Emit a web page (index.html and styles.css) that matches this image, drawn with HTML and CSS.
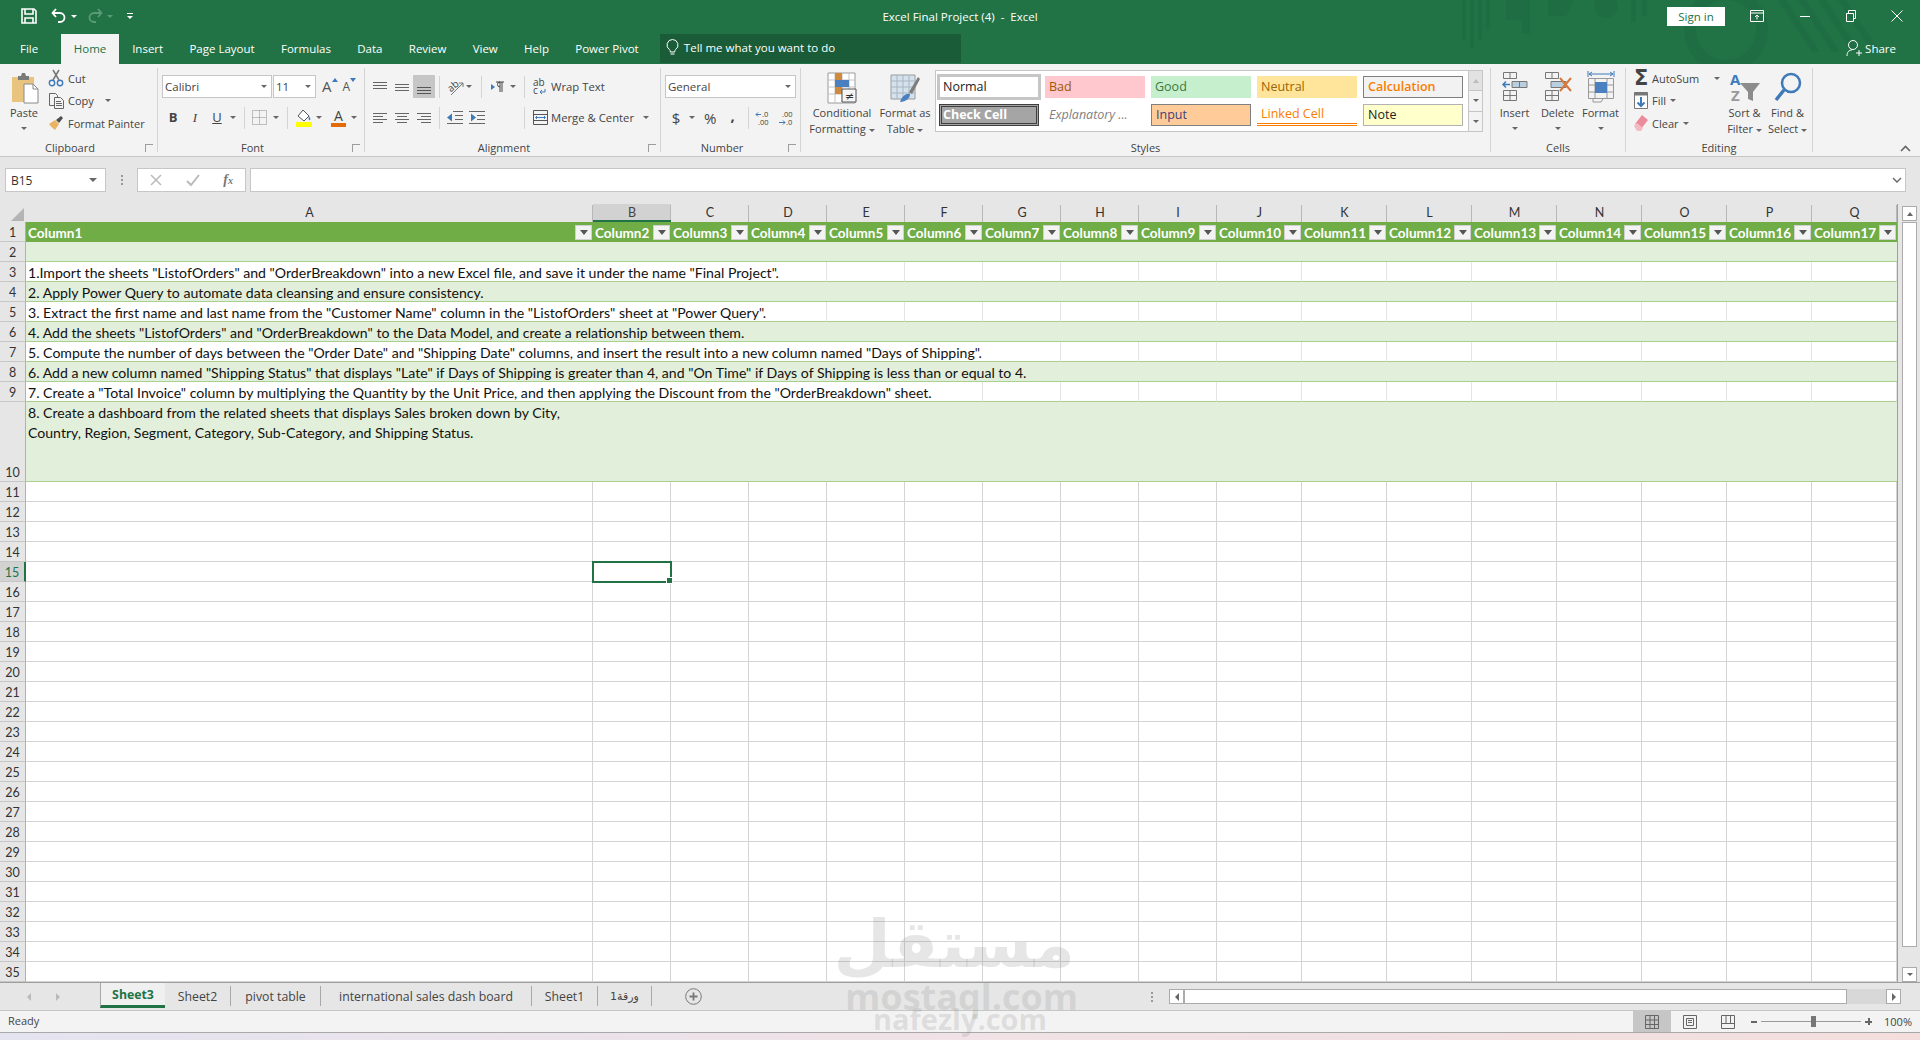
FILE: index.html
```html
<!DOCTYPE html>
<html lang="en">
<head>
  <meta charset="UTF-8">
  <title>Excel Final Project (4) - Excel</title>
  <link rel="stylesheet" href="styles.css">
</head>
<body>
  <div class="window">
    <div class="chrome">
      <svg class="deco" width="460" height="64" viewBox="0 0 460 64">
        <g fill="#1f6e43">
          <path d="M6 0h4v40h-4zM14 0h4v48h-4zM22 0h4v40h-4zM30 0h4v30h-4z"/>
          <path d="M50 0h24v34h-8v-14h-16z"/>
          <path d="M92 0h26l-8 16h-18z"/>
          <circle cx="150" cy="6" r="12"/>
          <path d="M175 0h5v22h-5zM186 0h5v16h-5z"/>
          <circle cx="270" cy="30" r="36" fill="none" stroke="#1f6e43" stroke-width="12"/>
          <path d="M330 0l34 52h-8L322 0zM350 0l34 52h-8L342 0zM370 0l34 52h-8L362 0zM390 0l34 52h-8L382 0z"/>
        </g>
      </svg>
      <!-- title bar -->
      <header class="titlebar">
        <div class="qat">
          <svg width="18" height="18" viewBox="0 0 18 18" fill="none" stroke="#fff" stroke-width="1.6"><path d="M2 2h12l2 2v12H2z"/><path d="M5 2v5h8V2M5 16v-5h8v5"/></svg>
          <svg class="undo" width="18" height="18" viewBox="0 0 18 18" fill="none" stroke="#fff" stroke-width="1.8"><path d="M6 2L2.500 6 6 10"/><path d="M3 6h7a4.500 4.500 0 0 1 0 9H8"/></svg>
          <span class="caret caret-w"></span>
          <svg class="redo" width="18" height="18" viewBox="0 0 18 18" fill="none" stroke="#5b9a76" stroke-width="1.8"><path d="M12 2l3.500 4L12 10"/><path d="M15 6H8a4.500 4.500 0 0 0 0 9h2"/></svg>
          <span class="caret caret-dim"></span>
          <span class="customize"><i></i><span class="caret caret-w"></span></span>
        </div>
        <div class="doc-title">Excel Final Project (4)&nbsp; -&nbsp; Excel</div>
        <div class="win-controls">
          <button class="signin">Sign in</button>
          <svg class="wc wc-first" width="14" height="12" viewBox="0 0 14 12" fill="none" stroke="#fff"><path d="M.5.500h13v11H.5zM.5 3h13"/><path d="M7 9.500V5M5 7l2-2 2 2"/></svg>
          <svg class="wc" width="12" height="12" viewBox="0 0 12 12" stroke="#fff"><path d="M1 6.500h10"/></svg>
          <svg class="wc" width="12" height="12" viewBox="0 0 12 12" fill="none" stroke="#fff"><path d="M1.500 3.500h7v8h-7zM3.500 3.500v-3h7v8h-2"/></svg>
          <svg class="wc" width="12" height="12" viewBox="0 0 12 12" stroke="#fff"><path d="M.5.500l11 11M11.500.500l-11 11"/></svg>
        </div>
      </header>

      <!-- ribbon tabs -->
      <nav class="tabs">
        <a class="tab tab-file">File</a>
        <a class="tab active">Home</a>
        <a class="tab">Insert</a>
        <a class="tab">Page Layout</a>
        <a class="tab">Formulas</a>
        <a class="tab">Data</a>
        <a class="tab">Review</a>
        <a class="tab">View</a>
        <a class="tab">Help</a>
        <a class="tab">Power Pivot</a>
        <div class="tellme">
          <svg width="13" height="17" viewBox="0 0 13 17" fill="none" stroke="#fff"><path d="M6.500.500a5.500 5.500 0 0 1 3 10.100c-.6.500-.8 1.400-.8 2.400H4.300c0-1-.2-1.900-.8-2.400A5.500 5.500 0 0 1 6.500.500zM4.500 15h4"/></svg>
          <span>Tell me what you want to do</span>
        </div>
        <div class="share">
          <svg width="16" height="18" viewBox="0 0 16 18" fill="none" stroke="#fff"><circle cx="7" cy="6" r="4.500"/><path d="M1 17c0-4 2-6 5-6M10 14h6M13 11v6"/></svg>
          <span>Share</span>
        </div>
      </nav>
    </div>

    <!-- ribbon -->
    <section class="ribbon">
      <div class="group g-clipboard">
        <div class="group-body clip">
          <div class="big big-paste">
            <svg width="28" height="32" viewBox="0 0 28 32"><path d="M1 5h22v25H1z" fill="#e9c47f"/><path d="M7 4h3l1-3h3l1 3h3v4H7z" fill="#7a7a7a"/><path d="M13 12h9l5 5v14H13z" fill="#fff" stroke="#8a8a8a"/><path d="M22 12v5h5" fill="none" stroke="#8a8a8a"/></svg>
            <span>Paste</span>
            <span class="caret"></span>
          </div>
          <div class="stack">
            <div class="small-btn">
              <svg width="16" height="18" viewBox="0 0 16 18" fill="none"><path d="M5 11L11 1M11 11L5 1" stroke="#777" stroke-width="1.500"/><circle cx="4" cy="14" r="2.700" stroke="#3e79b8" stroke-width="1.400"/><circle cx="12" cy="14" r="2.700" stroke="#3e79b8" stroke-width="1.400"/></svg>
              <span>Cut</span>
            </div>
            <div class="small-btn">
              <svg width="16" height="16" viewBox="0 0 16 16" fill="#f3f3f3" stroke="#666"><path d="M1.500.500h6l2 2v10h-8z"/><path d="M6.500 4.500h6l3 3v8h-9z"/><path d="M8 8.500h5M8 10.500h6M8 12.500h6"/></svg>
              <span>Copy</span>
              <span class="caret copy-caret"></span>
            </div>
            <div class="small-btn">
              <svg width="16" height="16" viewBox="0 0 16 16"><path d="M1 9l6-4 4 4-4 6c-2-2-4-3-6-6z" fill="#eab464"/><path d="M8 5l5-4 2 2-4 5z" fill="#4e4e4e"/></svg>
              <span>Format Painter</span>
            </div>
          </div>
        </div>
        <div class="group-label">Clipboard<i class="launcher"></i></div>
      </div>

      <div class="group g-font">
        <div class="group-body two-rows">
          <div class="tool-row">
            <div class="combo combo-font">Calibri<span class="caret"></span></div>
            <div class="combo combo-size">11<span class="caret"></span></div>
            <span class="grow-a">A<svg width="6" height="4" viewBox="0 0 6 4" fill="#3e79b8"><path d="M0 4l3-4 3 4z"/></svg></span>
            <span class="shrink-a">A<svg width="6" height="4" viewBox="0 0 6 4" fill="#3e79b8"><path d="M0 0l3 4 3-4z"/></svg></span>
          </div>
          <div class="tool-row">
            <span class="tb tb-b">B</span>
            <span class="tb tb-i">I</span>
            <span class="tb tb-u">U</span>
            <span class="caret c-u"></span>
            <i class="sep s-1"></i>
            <svg class="i-border" width="15" height="15" viewBox="0 0 15 15" fill="none" stroke="#8a8a8a" stroke-dasharray="1 1"><path d="M.5.500h14v14H.5zM7.500.500v14M.5 7.500h14"/></svg>
            <span class="caret c-b"></span>
            <i class="sep s-2"></i>
            <svg class="i-fill" width="16" height="18" viewBox="0 0 16 18"><path d="M7 1l6 6-5 5-6-5z" fill="#fff" stroke="#555"/><path d="M13 7c1 2 2 3 1 4s-2-1-1-4z" fill="#3e79b8"/><path d="M0 13h16v5H0z" fill="#ffff00"/></svg>
            <span class="caret c-f"></span>
            <span class="i-color">A<i></i></span>
            <span class="caret c-c"></span>
          </div>
        </div>
        <div class="group-label">Font<i class="launcher"></i></div>
      </div>

      <div class="group g-align">
        <div class="group-body two-rows">
          <div class="tool-row">
            <svg class="al" width="14" height="10" viewBox="0 0 14 10" stroke="#666"><path d="M0 .500h14M0 3.500h14M0 6.500h14"/></svg>
            <svg class="al" width="14" height="10" viewBox="0 0 14 10" stroke="#666"><path d="M0 2.500h14M0 5.500h14M0 8.500h14"/></svg>
            <span class="al-on"><svg width="14" height="10" viewBox="0 0 14 10" stroke="#555"><path d="M0 3.500h14M0 6.500h14M0 9.500h14"/></svg></span>
            <i class="sep s-3"></i>
            <svg class="i-orient" width="18" height="18" viewBox="0 0 18 18"><text x="1" y="11" transform="rotate(-40 7 9)" class="svg-ab">ab</text><path d="M4 17L16 5M16 5v4M16 5h-4" fill="none" stroke="#777"/></svg>
            <span class="caret c-o"></span>
            <i class="sep s-4"></i>
            <svg class="i-rtl" width="15" height="12" viewBox="0 0 15 12"><path d="M0 3l4 3-4 3z" fill="#3e79b8"/><path d="M5 1h8M11 1v10M9 1v10M9 1a2.500 2.500 0 0 0 0 5" fill="none" stroke="#444"/></svg>
            <span class="caret c-r"></span>
            <i class="sep s-5"></i>
            <svg class="i-wrap" width="13" height="16" viewBox="0 0 13 16"><text x="0" y="7" class="svg-ab">ab</text><text x="0" y="15" class="svg-ab">c</text><path d="M12 10v3H7M9 11l-2 2 2 2" fill="none" stroke="#3e79b8"/></svg>
            <span class="ribbon-text">Wrap Text</span>
          </div>
          <div class="tool-row">
            <svg class="al" width="14" height="10" viewBox="0 0 14 10" stroke="#666"><path d="M0 .500h14M0 3.500h10M0 6.500h14M0 9.500h10"/></svg>
            <svg class="al" width="14" height="10" viewBox="0 0 14 10" stroke="#666"><path d="M0 .500h14M2 3.500h10M0 6.500h14M2 9.500h10"/></svg>
            <svg class="al al-3" width="14" height="10" viewBox="0 0 14 10" stroke="#666"><path d="M0 .500h14M4 3.500h10M0 6.500h14M4 9.500h10"/></svg>
            <i class="sep s-3b"></i>
            <svg class="i-ind" width="16" height="13" viewBox="0 0 16 13"><path d="M6 .500h10M8 4.500h8M8 8.500h8M0 12.500h16" stroke="#666"/><path d="M0 6.500l5-4v8z" fill="#3e79b8"/></svg>
            <svg class="i-ind2" width="16" height="13" viewBox="0 0 16 13"><path d="M0 .500h16M8 4.500h8M8 8.500h8M0 12.500h16" stroke="#666"/><path d="M7 6.500l-5-4v8z" fill="#3e79b8"/></svg>
            <i class="sep s-4b"></i>
            <svg class="i-merge" width="15" height="15" viewBox="0 0 15 15" fill="none" stroke="#555"><path d="M.5.500h14v14H.5zM.5 4.500h14M.5 10.500h14"/><path d="M3 7.500h9M4 6L2.500 7.500 4 9M11 6l1.500 1.500L11 9" stroke="#3e79b8"/></svg>
            <span class="ribbon-text">Merge &amp; Center</span>
            <span class="caret c-m"></span>
          </div>
        </div>
        <div class="group-label">Alignment<i class="launcher"></i></div>
      </div>

      <div class="group g-number">
        <div class="group-body two-rows">
          <div class="tool-row">
            <div class="combo combo-num">General<span class="caret"></span></div>
          </div>
          <div class="tool-row num-row">
            <span class="n-cur">$</span>
            <span class="caret c-n"></span>
            <span class="n-pct">%</span>
            <span class="n-com">,</span>
            <i class="sep s-6"></i>
            <svg class="i-dec" width="15" height="16" viewBox="0 0 15 16"><text x="6" y="7" class="svg-dec">.0</text><text x="2" y="15" class="svg-dec">.00</text><path d="M0 4.500h5M2 2.500L0 4.500l2 2" fill="none" stroke="#3e79b8"/></svg>
            <svg class="i-dec2" width="15" height="16" viewBox="0 0 15 16"><text x="3" y="7" class="svg-dec">.00</text><text x="7" y="15" class="svg-dec">.0</text><path d="M0 12.500h6M4 10.500l2 2-2 2" fill="none" stroke="#3e79b8"/></svg>
          </div>
        </div>
        <div class="group-label">Number<i class="launcher"></i></div>
      </div>

      <div class="group g-styles">
        <div class="group-body styles-body">
          <div class="big big-cf">
            <svg width="30" height="31" viewBox="0 0 30 31"><path d="M1 1h27v30H1z" fill="#fff" stroke="#9a9a9a"/><path d="M1 8h27M1 15h27M1 22h27M8 1v30M15 1v30M22 1v30" stroke="#c4c4c4"/><path d="M8 1h7v7H8zM8 15h7v7H8z" fill="#cf8a3c"/><path d="M8 8h14v7H8z" fill="#4a7fc0"/><path d="M15 17h14v13H15z" fill="#f5f5f5" stroke="#555"/><text x="18" y="28" class="svg-neq">≠</text></svg>
            <span>Conditional</span>
            <span>Formatting <i class="caret"></i></span>
          </div>
          <div class="big big-ft">
            <svg width="30" height="31" viewBox="0 0 30 31"><path d="M1 3h24v24H1z" fill="#d4e2ee" stroke="#9a9a9a"/><path d="M1 9h24M1 15h24M1 21h24M7 3v24M13 3v24M19 3v24" stroke="#aab6c0"/><path d="M10 30c2-6 6-9 10-8 0 4-4 8-10 8z" fill="#4a7fc0"/><path d="M19 20L28 5l2 2-8 15z" fill="#7d7d7d"/></svg>
            <span>Format as</span>
            <span>Table <i class="caret"></i></span>
          </div>
          <div class="gallery">
            <div class="style-grid">
              <div class="st st-normal">Normal</div>
              <div class="st st-bad">Bad</div>
              <div class="st st-good">Good</div>
              <div class="st st-neutral">Neutral</div>
              <div class="st st-calc">Calculation</div>
              <div class="st st-check">Check Cell</div>
              <div class="st st-expl">Explanatory ...</div>
              <div class="st st-input">Input</div>
              <div class="st st-linked">Linked Cell</div>
              <div class="st st-note">Note</div>
            </div>
            <div class="gallery-scroll">
              <span class="gs gs-off"><i class="tri-up"></i></span>
              <span class="gs"><i class="caret"></i></span>
              <span class="gs gs-more"><i class="caret"></i></span>
            </div>
          </div>
        </div>
        <div class="group-label group-label-plain">Styles</div>
      </div>

      <div class="group g-cells">
        <div class="group-body cells-body">
          <div class="big big-cell">
            <svg width="26" height="31" viewBox="0 0 26 31" fill="none" stroke="#777"><path d="M1.500 1.500h13v6h-13zM8 1.500v6M1.500 19.500h13v10h-13zM1.500 24.500h13M8 19.500v10"/><path d="M10 10.500h15v6H10zM17.500 10.500v6" fill="#b9cfdf"/><path d="M8 13.500H1M4 10.500l-3 3 3 3" stroke="#3e79b8" stroke-width="1.500"/></svg>
            <span>Insert</span><span class="caret"></span>
          </div>
          <div class="big big-cell">
            <svg width="28" height="31" viewBox="0 0 28 31" fill="none" stroke="#777"><path d="M1.500 1.500h13v6h-13zM8 1.500v6M1.500 19.500h13v10h-13zM1.500 24.500h13M8 19.500v10"/><path d="M7 10.500h15v6H7z" fill="#b9cfdf"/><path d="M16 7l11 13M27 7L16 20" stroke="#d9773b" stroke-width="2"/></svg>
            <span>Delete</span><span class="caret"></span>
          </div>
          <div class="big big-cell">
            <svg width="28" height="33" viewBox="0 0 28 33" fill="none" stroke="#999"><path d="M1 1v6M27 1v6M2 4h24M5 2L2 4l3 2M23 2l3 2-3 2" stroke="#3e79b8"/><path d="M1.500 8.500h25v20h-25zM1.500 15h25M1.500 22h25M8 8.500v20M20 8.500v20"/><path d="M8 12h12v11H8z" fill="#4a7fc0" stroke="none"/><path d="M6 28v4h8l2-3"/></svg>
            <span>Format</span><span class="caret"></span>
          </div>
        </div>
        <div class="group-label group-label-plain">Cells</div>
      </div>

      <div class="group g-editing">
        <div class="group-body editing-body">
          <div class="stack stack-edit">
            <div class="small-btn">
              <span class="sigma">Σ</span>
              <span>AutoSum</span>
              <span class="caret c-sum"></span>
            </div>
            <div class="small-btn">
              <svg width="14" height="17" viewBox="0 0 14 17"><path d="M.5.500h13v16H.5z" fill="#fff" stroke="#777"/><path d="M.5.500h13v3H.5z" fill="#777"/><path d="M7 5v9M3.500 10.500L7 14l3.500-3.500" fill="none" stroke="#3e79b8" stroke-width="2"/></svg>
              <span>Fill</span>
              <span class="caret"></span>
            </div>
            <div class="small-btn">
              <svg width="14" height="16" viewBox="0 0 14 16"><path d="M8 0l6 5-7 9-6-5z" fill="#ec8b99"/><path d="M0 11l3-3 6 5-2 3H3z" fill="#f5b9c1"/></svg>
              <span>Clear</span>
              <span class="caret"></span>
            </div>
          </div>
          <div class="big big-sort">
            <svg width="30" height="31" viewBox="0 0 30 31"><text x="0" y="13" class="svg-a">A</text><text x="1" y="29" class="svg-z">Z</text><path d="M10 11h20l-7 9v9l-5-2v-7z" fill="#8c8c8c"/></svg>
            <span>Sort &amp;</span>
            <span>Filter <i class="caret"></i></span>
          </div>
          <div class="big big-find">
            <svg width="28" height="31" viewBox="0 0 28 31" fill="none" stroke="#3e79b8"><circle cx="17" cy="11" r="9" stroke-width="2.500"/><path d="M10 18L2 28" stroke-width="3.500"/></svg>
            <span>Find &amp;</span>
            <span>Select <i class="caret"></i></span>
          </div>
        </div>
        <div class="group-label group-label-plain">Editing</div>
      </div>
      <svg class="collapse" width="11" height="7" viewBox="0 0 11 7" fill="none" stroke="#666" stroke-width="1.600"><path d="M1 6l4.500-4.500L10 6"/></svg>
    </section>

    <!-- formula bar -->
    <div class="formula-bar">
      <div class="namebox">B15<span class="caret"></span></div>
      <div class="fb-dots"><i></i><i></i><i></i></div>
      <div class="fb-buttons">
        <svg width="12" height="12" viewBox="0 0 12 12" stroke="#bbb" stroke-width="1.500"><path d="M1 1l10 10M11 1L1 11"/></svg>
        <svg width="14" height="12" viewBox="0 0 14 12" fill="none" stroke="#bbb" stroke-width="2"><path d="M1 7l4 4 8-10"/></svg>
        <span class="fx">f<small>x</small></span>
      </div>
      <div class="fb-input"><svg width="10" height="6" viewBox="0 0 10 6" fill="none" stroke="#666" stroke-width="1.400"><path d="M1 1l4 4 4-4"/></svg></div>
    </div>

    <!-- sheet area, filled in by script.js -->
    <div class="sheet">
      <div class="grid" id="grid"></div>
      <div class="vscroll">
        <span class="sb-btn"><i class="tri-up"></i></span>
        <span class="sb-thumb"></span>
        <span class="sb-btn sb-down"><i class="caret"></i></span>
      </div>
    </div>

    <!-- sheet tabs -->
    <div class="sheet-tabs">
      <span class="nav-arrows"><i class="tri-l"></i><i class="tri-r"></i></span>
      <a class="stab on">Sheet3</a>
      <a class="stab t-66">Sheet2</a>
      <a class="stab t-90">pivot table</a>
      <a class="stab t-211">international sales dash board</a>
      <a class="stab t-66">Sheet1</a>
      <a class="stab stab-ar t-54" dir="rtl">ورقة1</a>
      <svg class="add-sheet" width="17" height="17" viewBox="0 0 17 17" fill="none" stroke="#777"><circle cx="8.500" cy="8.500" r="7.800"/><path d="M8.500 4.500v8M4.500 8.500h8" stroke-width="1.800"/></svg>
      <div class="fb-dots tabs-dots"><i></i><i></i><i></i></div>
      <div class="hscroll">
        <span class="sb-btn"><i class="tri-l"></i></span>
        <span class="hs-thumb"></span>
        <span class="hs-gap"></span>
        <span class="sb-btn"><i class="tri-r"></i></span>
      </div>
    </div>

    <!-- status bar -->
    <footer class="statusbar">
      <span class="ready">Ready</span>
      <div class="views">
        <span class="view on"><svg width="14" height="14" viewBox="0 0 14 14" fill="none" stroke="#666"><path d="M.5.500h13v13H.5zM.5 5h13M.5 9.500h13M5 .5v13M9.500.5v13"/></svg></span>
        <span class="view"><svg width="14" height="14" viewBox="0 0 14 14" fill="none" stroke="#666"><path d="M.5.500h13v13H.5zM3.500 3.500h7v7h-7zM5 5.500h4M5 7.500h4"/></svg></span>
        <span class="view"><svg width="14" height="14" viewBox="0 0 14 14" fill="none" stroke="#666"><path d="M.5.500h13v13H.5zM.5 8.500h13M5 .5v8M9.500.5v8"/></svg></span>
      </div>
      <div class="zoom">
        <span class="z-minus"></span>
        <span class="z-track"><i></i></span>
        <span class="z-plus"></span>
        <span class="z-val">100%</span>
      </div>
    </footer>
    <div class="desktop"></div>

    <!-- watermark over the page -->
    <div class="watermark">
      <div class="wm-logo" dir="rtl">مستقل</div>
      <div class="wm-a">mostaql.com</div>
      <div class="wm-b">nafezly.com</div>
    </div>
  </div>
  <script src="script.js"></script>
</body>
</html>
```

FILE: styles.css
```css
* {
  box-sizing: border-box;
}

html, body {
  margin: 0;
  height: 100%;
  overflow: hidden;
}

body {
  font-family: "Open Sans", "Noto Sans", sans-serif;
  font-size: 11px;
  color: #333;
  background: #f3f3f3;
}

.window {
  position: relative;
  width: 1920px;
  height: 1040px;
  display: flex;
  flex-direction: column;
  overflow: hidden;
}

i {
  font-style: normal;
}

svg {
  overflow: visible;
}

.caret {
  display: inline-block;
  width: 0;
  height: 0;
  border-left: 3px solid transparent;
  border-right: 3px solid transparent;
  border-top: 3px solid #666;
  flex: none;
}

.caret-w { border-top-color: #fff; }
.caret-dim { border-top-color: #5b9a76; }

/* title bar */
.chrome {
  position: relative;
  height: 64px;
  flex: none;
  background: #217346;
  overflow: hidden;
}

.deco {
  position: absolute;
  left: 1456px;
  top: 0;
}

.titlebar {
  position: relative;
  height: 34px;
  padding-bottom: 2px;
  color: #fff;
  display: grid;
  grid-template-columns: 1fr auto 1fr;
  align-items: center;
}

.qat {
  display: flex;
  align-items: center;
  padding-left: 20px;
}

.undo { margin-left: 12px; }
.qat .caret { margin-left: 3px; }
.redo { margin-left: 9px; }

.customize {
  margin-left: 14px;
  display: flex;
  flex-direction: column;
  gap: 2px;
  align-items: center;
  width: 6px;
}

.customize i {
  width: 6px;
  height: 1px;
  background: #fff;
}

.qat .customize .caret { margin: 0; }

.doc-title {
  font-size: 11.500px;
}

.win-controls {
  display: flex;
  justify-content: flex-end;
  align-items: center;
}

.signin {
  width: 58px;
  height: 19px;
  border: 0;
  background: #fff;
  color: #217346;
  font: 11.500px "Open Sans", sans-serif;
  padding: 0;
  margin-right: 25px;
}

.wc { margin-right: 34px; }
.wc:last-child { margin-right: 17px; }
.wc-first { margin-right: 35px; }

/* tabs */
.tabs {
  position: relative;
  height: 30px;
  display: flex;
  align-items: stretch;
  color: #fff;
  font-size: 11.500px;
}

.tab {
  padding: 0 13.150px 2px;
  display: flex;
  align-items: center;
}

.tab-file {
  padding: 0 0 2px 20px;
  width: 61px;
}

.tab.active {
  background: #f3f3f3;
  color: #217346;
  width: 58px;
  justify-content: center;
  padding: 0 0 2px;
}

.tellme {
  margin-left: 8px;
  width: 301px;
  height: 29px;
  background: #1a5c38;
  display: flex;
  align-items: center;
  gap: 5px;
  padding: 0 0 2px 6px;
}

.share {
  margin-left: auto;
  padding: 0 24px 2px 0;
  display: flex;
  align-items: center;
  gap: 3px;
}

/* ribbon */
.ribbon {
  position: relative;
  height: 93px;
  background: #f3f3f3;
  border-bottom: 1px solid #c6c6c6;
  display: flex;
  padding-top: 4px;
  color: #444;
}

.group {
  height: 84px;
  border-right: 1px solid #d4d4d4;
  display: flex;
  flex-direction: column;
  flex: none;
}

.group-body {
  height: 70px;
  flex: none;
}

.group-label {
  position: relative;
  height: 14px;
  line-height: 20px;
  text-align: center;
  white-space: nowrap;
  padding-right: 17px;
}

.group-label-plain { padding-right: 0; }

.launcher {
  position: absolute;
  right: 4px;
  top: 6px;
  width: 8px;
  height: 8px;
  border-left: 1px solid #888;
  border-top: 1px solid #888;
  opacity: .8;
}

.g-clipboard { width: 158px; }
.g-font { width: 207px; }
.g-align { width: 296px; }
.g-number { width: 140px; }
.g-styles { width: 690px; }
.g-cells { width: 135px; }
.g-editing { width: 187px; }

.big {
  display: flex;
  flex-direction: column;
  align-items: center;
  flex: none;
  line-height: 16px;
  white-space: nowrap;
}

.big > svg { margin-bottom: 2px; }
.big .caret { vertical-align: middle; }

.clip {
  display: flex;
}

.big-paste {
  width: 48px;
  padding-top: 4px;
}

.big-paste > svg { margin: 0 0 1px 2px; }
.big-paste .caret { margin-top: 6px; }

.stack {
  display: flex;
  flex-direction: column;
  margin-top: -1px;
}

.small-btn {
  height: 22.500px;
  display: flex;
  align-items: center;
  gap: 4px;
  white-space: nowrap;
}

.copy-caret { margin-left: 7px; }

.two-rows {
  padding-top: 7px;
  display: flex;
  flex-direction: column;
  gap: 8px;
}

.tool-row {
  height: 23px;
  display: flex;
  align-items: center;
}

.g-font .tool-row { padding-left: 4px; }

.combo {
  height: 23px;
  background: #fff;
  border: 1px solid #c6c6c6;
  display: flex;
  align-items: center;
  justify-content: space-between;
  padding: 0 4px 0 2px;
  font-size: 11.500px;
}

.combo-font { width: 110px; }
.combo-size { width: 43px; margin-left: 1px; }
.combo-num { width: 131px; margin-left: 4px; }

.grow-a, .shrink-a {
  display: inline-flex;
  align-items: flex-start;
  font-size: 15px;
  color: #555;
  line-height: 17px;
}

.grow-a { margin-left: 6px; }
.shrink-a { margin-left: 5px; font-size: 12px; }

.tb {
  width: 22px;
  text-align: center;
  font-size: 13px;
  color: #444;
  line-height: 23px;
}

.tb-b { font-weight: 700; }
.tb-i { font-style: italic; font-family: "Liberation Serif", serif; }
.tb-u { text-decoration: underline; }

.c-u { margin-left: 2px; }

.sep {
  width: 1px;
  height: 22px;
  background: #d4d4d4;
  flex: none;
}

.s-1 { margin: 0 6px 0 8px; }
.i-border { margin-left: 1px; flex: none; }
.c-b { margin-left: 6px; }
.s-2 { margin: 0 8px; }
.i-fill { flex: none; }
.c-f { margin-left: 4px; }

.i-color {
  margin-left: 9px;
  width: 15px;
  text-align: center;
  font-size: 14px;
  line-height: 15px;
  color: #444;
  display: flex;
  flex-direction: column;
}

.i-color i {
  height: 4px;
  background: #e36c09;
}

.c-c { margin-left: 5px; }

.g-align .tool-row { padding-left: 8px; }
.al { margin-right: 8px; flex: none; }
.al-3 { margin-right: 0; }

.al-on {
  width: 22px;
  height: 23px;
  background: #c6c6c6;
  margin-left: -4px;
  display: flex;
  align-items: flex-end;
  justify-content: center;
  padding-bottom: 4px;
}

.s-3 { margin: 0 7px 0 4px; }
.s-3b { margin: 0 7px 0 8px; }
.i-orient { flex: none; }
.c-o { margin-left: 1px; }
.s-4 { margin: 0 9px; }
.i-rtl { flex: none; }
.c-r { margin-left: 4px; }
.s-5 { margin: 0 8px; }
.s-4b { margin: 0 8px 0 39px; }
.i-ind { flex: none; }
.i-ind2 { margin-left: 6px; flex: none; }
.i-wrap { margin-right: 5px; flex: none; }
.i-merge { margin-right: 3px; flex: none; }
.ribbon-text { white-space: nowrap; font-size: 11.300px; }
.c-m { margin-left: 9px; }

.num-row { padding-left: 10px; }
.n-cur { font-size: 15px; width: 10px; text-align: center; }
.c-n { margin-left: 8px; }
.n-pct { font-size: 15px; margin-left: 9px; }
.n-com { font-size: 15px; font-weight: 700; margin: -6px 0 0 14px; }
.s-6 { margin: 0 7px 0 13px; }
.i-dec { flex: none; }
.i-dec2 { margin-left: 8px; flex: none; }

.svg-ab { font: 10px "Open Sans", sans-serif; fill: #444; }
.svg-dec { font: 7.500px "Open Sans", sans-serif; fill: #444; }
.svg-neq { font: 11px "DejaVu Sans", sans-serif; fill: #333; }
.svg-a { font: 700 15px "Open Sans", sans-serif; fill: #3e79b8; }
.svg-z { font: 700 15px "Open Sans", sans-serif; fill: #999; }

.styles-body {
  display: flex;
  align-items: flex-start;
}

.big-cf {
  width: 66px;
  margin-left: 8px;
  padding-top: 4px;
}

.big-ft {
  width: 60px;
  padding-top: 4px;
}

.gallery {
  margin: 2px 0 0;
  height: 62px;
  border: 1px solid #c6c6c6;
  background: #fff;
  display: flex;
}

.style-grid {
  display: grid;
  grid-template-columns: repeat(5, 100px);
  grid-template-rows: 22px 22px;
  column-gap: 6px;
  row-gap: 6px;
  padding: 5px 4px 0 3px;
  width: 532px;
}

.st {
  display: flex;
  align-items: center;
  padding: 0 0 1px 4px;
  white-space: nowrap;
  font-size: 12.500px;
}

.st-normal {
  outline: 3px solid #c6c6c6;
  outline-offset: -1px;
  color: #222;
}

.st-bad { background: #ffc7ce; color: #9c5700; }
.st-good { background: #c6efce; color: #3a7a3f; }
.st-neutral { background: #ffe49c; color: #9c6500; }
.st-calc { background: #f2f2f2; color: #fa7d00; border: 1px solid #7f7f7f; font-weight: 600; }
.st-check { background: #a5a5a5; color: #fff; font-weight: 700; border: 3px double #3f3f3f; padding-left: 1px; }
.st-expl { color: #7f7f7f; font-style: italic; }
.st-input { background: #ffcc99; color: #3f3f76; border: 1px solid #7f7f7f; }
.st-linked { color: #fa7d00; border-bottom: 3px double #fa7d00; }
.st-note { background: #ffffcc; color: #222; border: 1px solid #b2b2b2; }

.gallery-scroll {
  width: 14px;
  border-left: 1px solid #c6c6c6;
  display: flex;
  flex-direction: column;
  background: #f3f3f3;
}

.gs {
  flex: 1;
  display: flex;
  align-items: center;
  justify-content: center;
  border-bottom: 1px solid #c6c6c6;
}

.gs:last-child { border-bottom: 0; }
.gs-off { background: #e2e2e2; }
.gs-off .tri-up { border-bottom-color: #bbb; }

.tri-up {
  width: 0;
  height: 0;
  border-left: 3.500px solid transparent;
  border-right: 3.500px solid transparent;
  border-bottom: 4px solid #666;
}

.tri-l, .tri-r {
  width: 0;
  height: 0;
  border-top: 4px solid transparent;
  border-bottom: 4px solid transparent;
}

.tri-l { border-right: 4px solid #666; }
.tri-r { border-left: 4px solid #666; }

.cells-body {
  display: flex;
  padding-left: 2px;
}

.big-cell {
  width: 43px;
  padding-top: 2px;
}

.big-cell > svg { height: 33px; margin-bottom: 2px; }
.big-cell .caret { margin-top: 6px; }

.editing-body {
  display: flex;
}

.stack-edit {
  width: 97px;
  padding-left: 8px;
  flex: none;
}

.sigma {
  font: 700 21px "DejaVu Sans", sans-serif;
  color: #444;
  width: 14px;
  line-height: 16px;
}

.stack-edit .small-btn svg { width: 14px; flex: none; }
.c-sum { margin-left: 11px; }

.big-sort, .big-find {
  width: 43px;
  padding-top: 4px;
}

.collapse {
  position: absolute;
  right: 9px;
  top: 81px;
}

/* formula bar */
.formula-bar {
  height: 47px;
  flex: none;
  background: #e6e6e6;
  display: flex;
  padding: 11px 14px 12px 5px;
}

.namebox {
  width: 101px;
  background: #fff;
  border: 1px solid #c6c6c6;
  display: flex;
  align-items: center;
  justify-content: space-between;
  padding: 0 8px 0 5px;
  font-size: 12px;
}

.namebox .caret {
  border-left-width: 4px;
  border-right-width: 4px;
  border-top-width: 4px;
}

.fb-dots {
  width: 31px;
  display: flex;
  flex-direction: column;
  align-items: center;
  justify-content: center;
  gap: 2px;
}

.fb-dots i {
  width: 2px;
  height: 2px;
  background: #999;
}

.fb-buttons {
  width: 109px;
  background: #fff;
  border: 1px solid #c6c6c6;
  display: flex;
  align-items: center;
  justify-content: space-between;
  padding: 0 12px;
}

.fx {
  font: italic 700 14px "Liberation Serif", serif;
  color: #777;
}

.fx small { font-size: 10px; }

.fb-input {
  margin-left: 4px;
  flex: 1;
  background: #fff;
  border: 1px solid #c6c6c6;
  display: flex;
  align-items: center;
  justify-content: flex-end;
  padding-right: 3px;
}

/* grid */
.sheet {
  display: flex;
  height: 778px;
  flex: none;
  background: #fff;
}

.grid {
  position: relative;
  width: 1897px;
  display: grid;
  grid-template-columns: 26px 567px repeat(8, 78px) repeat(8, 85px);
  grid-template-rows: 18px repeat(9, 20px) 80px;
  grid-auto-rows: 20px;
  font-family: Lato, sans-serif;
  font-size: 14.100px;
  color: #111;
}

.corner {
  background: #e6e6e6;
  position: relative;
}

.corner::after {
  content: "";
  position: absolute;
  right: 2px;
  bottom: 1px;
  border-left: 13px solid transparent;
  border-bottom: 13px solid #b4b4b4;
}

.ch {
  background: #e6e6e6;
  text-align: center;
  line-height: 18px;
  font-size: 12.500px;
  color: #333;
  position: relative;
}

.ch::after {
  content: "";
  position: absolute;
  right: 0;
  top: 1px;
  bottom: 0;
  width: 1px;
  background: #b8b8b8;
}

.ch.sel {
  background: #d2d2d2;
  border-bottom: 2px solid #217346;
  color: #444;
}

.rh {
  background: #e6e6e6;
  border-bottom: 1px solid #c6c6c6;
  border-right: 1px solid #b0b0b0;
  font-size: 12.500px;
  color: #333;
  line-height: 16px;
  display: flex;
  align-items: flex-end;
  justify-content: center;
}

.rh.sel {
  background: #d2d2d2;
  color: #217346;
  border-right: 2px solid #217346;
}

.c {
  border-right: 1px solid #d4d4d4;
  border-bottom: 1px solid #d4d4d4;
  padding: 1px 0 0 2px;
  line-height: 20px;
  white-space: nowrap;
}

.c.white {
  border-right-color: #e4e4e4;
  border-bottom-color: #a9d08e;
}

.c.band {
  background: #e2efda;
  border-right: 0;
  border-bottom-color: #a9d08e;
}

.c.full { grid-column: span 17; }
.c.s4 { grid-column: span 4; }
.c.s6 { grid-column: span 6; }
.c.s7 { grid-column: span 7; }

.c.head {
  background: #70ad47;
  color: #fff;
  font-weight: 700;
  font-size: 13.500px;
  border: 0;
  display: flex;
  align-items: center;
  justify-content: space-between;
  padding: 1px 1px 0 2px;
}

.filter {
  width: 17px;
  height: 15px;
  background: #f3f3f3;
  border: 1px solid #d0d0d0;
  display: flex;
  align-items: center;
  justify-content: center;
  flex: none;
}

.filter .caret {
  border-left-width: 4px;
  border-right-width: 4px;
  border-top-width: 5px;
  border-top-color: #555;
}

.cursor {
  position: absolute;
  left: 592px;
  top: 357px;
  width: 80px;
  height: 22px;
  border: 2px solid #217346;
}

.cursor::after {
  content: "";
  position: absolute;
  right: -3px;
  bottom: -3px;
  width: 5px;
  height: 5px;
  background: #217346;
  border: 1px solid #fff;
}

.vscroll {
  width: 23px;
  background: #e6e6e6;
  border-left: 1px solid #9e9e9e;
  display: flex;
  flex-direction: column;
  padding: 2px 3px 0 4px;
}

.sb-btn {
  width: 15px;
  height: 15px;
  background: #fff;
  border: 1px solid #ababab;
  display: flex;
  align-items: center;
  justify-content: center;
  flex: none;
}

.sb-thumb {
  width: 15px;
  height: 725px;
  background: #fff;
  border: 1px solid #ababab;
  margin-top: 1px;
  flex: none;
}

.sb-down {
  margin-top: auto;
}

/* sheet tabs */
.sheet-tabs {
  height: 28px;
  flex: none;
  background: #e6e6e6;
  border-top: 1px solid #9e9e9e;
  display: flex;
  align-items: flex-start;
  font-size: 12.300px;
  color: #444;
}

.nav-arrows {
  width: 100px;
  height: 27px;
  display: flex;
  align-items: center;
  gap: 25px;
  padding-left: 27px;
}

.nav-arrows i { opacity: .35; }

.stab {
  display: flex;
  align-items: center;
  justify-content: center;
  height: 20px;
  margin-top: 3px;
  border-right: 1px solid #a8a8a8;
  white-space: nowrap;
  flex: none;
}

.t-66 { width: 66px; }
.t-90 { width: 90px; }
.t-211 { width: 211px; }
.t-54 { width: 54px; }

.stab.on {
  width: 65px;
  height: 25px;
  margin-top: 0;
  background: #f0f0f0;
  color: #217346;
  font-weight: 700;
  border-right: 0;
  border-bottom: 3px solid #217346;
  border-left: 1px solid #a8a8a8;
}

.stab-ar { font-family: "DejaVu Sans", sans-serif; font-size: 11px; }

.add-sheet {
  margin: 5px 0 0 33px;
  flex: none;
}

.tabs-dots {
  height: 27px;
  width: 8px;
  margin-left: 446px;
}

.hscroll {
  margin: 6px 0 0 13px;
  width: 732px;
  display: flex;
}

.hs-thumb {
  width: 663px;
  height: 15px;
  background: #fff;
  border: 1px solid #ababab;
  flex: none;
}

.hs-gap {
  flex: 1;
  background: #d8d8d8;
  height: 15px;
}

/* status bar */
.statusbar {
  height: 23px;
  flex: none;
  background: #f3f3f3;
  border-top: 1px solid #c6c6c6;
  border-bottom: 1px solid #a8a8a8;
  display: flex;
  align-items: center;
  font-size: 11px;
  color: #444;
}

.ready { padding: 0 0 2px 8px; }

.views {
  margin-left: auto;
  display: flex;
  height: 21px;
}

.view {
  width: 38px;
  display: flex;
  align-items: center;
  justify-content: center;
}

.view.on { background: #c6c6c6; }

.zoom {
  display: flex;
  align-items: center;
  margin-left: 4px;
  padding-right: 8px;
}

.z-minus {
  width: 6px;
  height: 2px;
  background: #666;
}

.z-track {
  position: relative;
  width: 100px;
  height: 1px;
  background: #9a9a9a;
  margin: 0 4px;
}

.z-track i {
  position: absolute;
  left: 50px;
  top: -5px;
  width: 5px;
  height: 11px;
  background: #777;
}

.z-plus {
  position: relative;
  width: 7px;
  height: 2px;
  background: #666;
}

.z-plus::after {
  content: "";
  position: absolute;
  left: 2.500px;
  top: -2.500px;
  width: 2px;
  height: 7px;
  background: #666;
}

.z-val { margin-left: 12px; }

.desktop {
  flex: 1;
  background: linear-gradient(90deg, #e4e4f0, #f0e2e6 50%, #f3dedd);
}

/* watermark */
.watermark {
  position: absolute;
  left: 845px;
  top: 905px;
  width: 230px;
  text-align: center;
  color: rgba(130, 130, 130, .2);
  pointer-events: none;
}

.wm-logo {
  font: 700 66px/80px "DejaVu Sans", sans-serif;
  height: 78px;
}

.wm-a {
  font: 700 36px/30px "Open Sans", sans-serif;
  margin-top: -1px;
}

.wm-b {
  font: 700 29px/20px "Open Sans", sans-serif;
  margin-top: -3px;
}
```

FILE: script.js
```javascript
const grid = document.getElementById('grid');
const letters = 'ABCDEFGHIJKLMNOPQ'.split('');

// row -> [text, how many columns the text runs over]
const rows = {
  3: ['1.Import the sheets "ListofOrders" and "OrderBreakdown" into a new Excel file, and save it under the name "Final Project".', 4],
  4: ['2. Apply Power Query to automate data cleansing and ensure consistency.', 17],
  5: ['3. Extract the first name and last name from the "Customer Name" column in the "ListofOrders" sheet at "Power Query".', 4],
  6: ['4. Add the sheets "ListofOrders" and "OrderBreakdown" to the Data Model, and create a relationship between them.', 17],
  7: ['5. Compute the number of days between the "Order Date" and "Shipping Date" columns, and insert the result into a new column named "Days of Shipping".', 7],
  8: ['6. Add a new column named "Shipping Status" that displays "Late" if Days of Shipping is greater than 4, and "On Time" if Days of Shipping is less than or equal to 4.', 17],
  9: ['7. Create a "Total Invoice" column by multiplying the Quantity by the Unit Price, and then applying the Discount from the "OrderBreakdown" sheet.', 6]
};

function add(cls, text) {
  const el = document.createElement('div');
  el.className = cls;
  if (text) el.textContent = text;
  grid.appendChild(el);
  return el;
}

add('corner');
letters.forEach(function(l) {
  add(l === 'B' ? 'ch sel' : 'ch', l);
});

for (let r = 1; r <= 35; r++) {
  add(r === 15 ? 'rh sel' : 'rh', String(r));

  if (r === 1) {
    letters.forEach(function(l, i) {
      const cell = add('c head');
      cell.innerHTML = '<span>Column' + (i + 1) + '</span><span class="filter"><i class="caret"></i></span>';
    });
  } else if (r === 2) {
    add('c band full');
  } else if (r === 10) {
    const cell = add('c band full');
    cell.innerHTML = '8. Create a dashboard from the related sheets that displays Sales broken down by City,<br>Country, Region, Segment, Category, Sub-Category, and Shipping Status.';
  } else if (rows[r]) {
    const text = rows[r][0];
    const span = rows[r][1];
    if (span === 17) {
      add('c band full', text);
    } else {
      add('c white s' + span, text);
      for (let i = span; i < 17; i++) add('c white');
    }
  } else {
    letters.forEach(function() { add('c'); });
  }
}

add('cursor');
```
